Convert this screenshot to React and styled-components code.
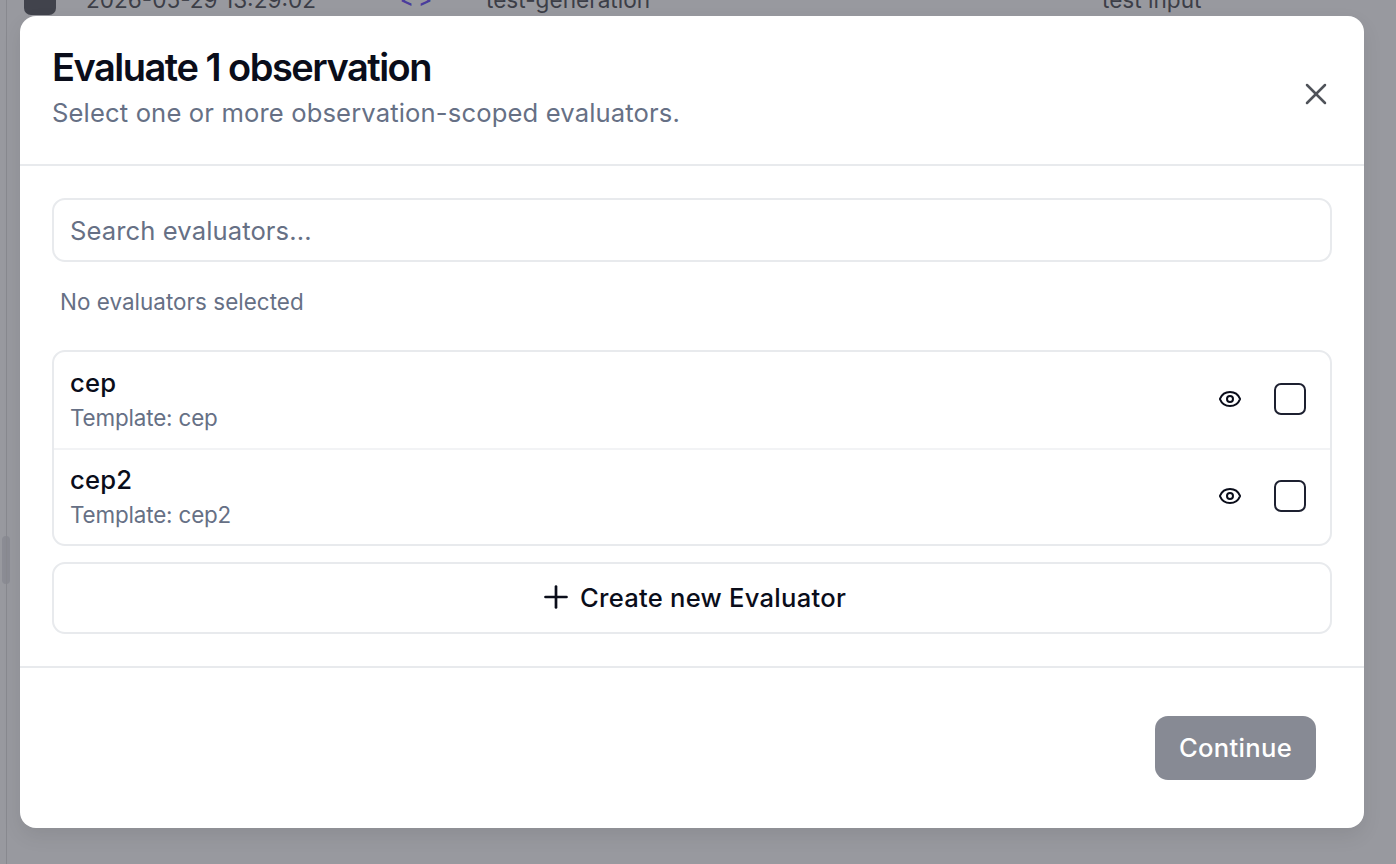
import styled, { createGlobalStyle } from "styled-components";
import { Eye, Plus, X } from "lucide-react";

const GlobalStyle = createGlobalStyle`
  html, body {
    margin: 0;
    padding: 0;
    background: #98999f;
    font-family: Inter, "Liberation Sans", sans-serif;
  }
  * { box-sizing: border-box; }
`;

const evaluators = [
  { name: "cep", template: "Template: cep" },
  { name: "cep2", template: "Template: cep2" },
];

export default function App() {
  return (
    <Page>
      <GlobalStyle />
      <BehindRow>
        <BehindCheck />
        <BehindCell $width="314px">2026-05-29 13:29:02</BehindCell>
        <BehindCode>{"< >"}</BehindCode>
        <BehindCell $width="616px">test-generation</BehindCell>
        <BehindCell $width="200px">test input</BehindCell>
      </BehindRow>
      <ScrollThumb />
      <SideRule />
      <Dialog>
        <Header>
          <Title>Evaluate 1 observation</Title>
          <Subtitle>Select one or more observation-scoped evaluators.</Subtitle>
          <CloseButton aria-label="Close">
            <X size={36} strokeWidth={1.7} />
          </CloseButton>
        </Header>
        <Body>
          <SearchInput placeholder="Search evaluators..." />
          <SelectedNote>No evaluators selected</SelectedNote>
          <List>
            {evaluators.map((item) => (
              <Row key={item.name}>
                <RowText>
                  <RowName>{item.name}</RowName>
                  <RowTemplate>{item.template}</RowTemplate>
                </RowText>
                <EyeButton aria-label="Preview">
                  <Eye size={24} strokeWidth={2} />
                </EyeButton>
                <CheckBox />
              </Row>
            ))}
          </List>
          <CreateButton>
            <Plus size={36} strokeWidth={1.8} />
            Create new Evaluator
          </CreateButton>
        </Body>
        <Footer>
          <ContinueButton>Continue</ContinueButton>
        </Footer>
      </Dialog>
    </Page>
  );
}

const Page = styled.div`
  position: relative;
  width: 1396px;
  height: 864px;
  overflow: hidden;
  background: #98999f;
`;

const BehindRow = styled.div`
  display: flex;
  align-items: center;
  height: 24px;
  margin-top: -13px;
  padding-left: 24px;
  color: #3c3e47;
  font-size: 22.6px;
`;

const BehindCheck = styled.div`
  width: 32px;
  height: 32px;
  margin-right: 30px;
  border-radius: 7px;
  background: #41434c;
`;

const BehindCell = styled.div`
  width: ${(p) => p.$width};
  flex-shrink: 0;
  white-space: nowrap;
`;

const BehindCode = styled.div`
  width: 86px;
  color: #4a3c9c;
  font-size: 20px;
  font-weight: 600;
`;

const SideRule = styled.div`
  position: absolute;
  left: 6px;
  top: 0;
  bottom: 0;
  width: 1px;
  background: #88898f;
`;

const ScrollThumb = styled.div`
  position: absolute;
  left: 2px;
  top: 536px;
  width: 8px;
  height: 48px;
  border-radius: 4px;
  background: #8b8c94;
`;

const Dialog = styled.div`
  position: absolute;
  left: 20px;
  top: 16px;
  width: 1344px;
  height: 812px;
  display: flex;
  flex-direction: column;
  overflow: hidden;
  border-radius: 16px;
  background: #fff;
  box-shadow: 0 8px 20px rgba(0, 0, 0, 0.08);
`;

const Header = styled.div`
  position: relative;
  height: 150px;
  padding: 29px 32px 0;
  border-bottom: 2px solid #e8eaed;
`;

const Title = styled.h2`
  margin: 0;
  color: #0a0d1a;
  font-size: 38px;
  line-height: 44px;
  font-weight: 600;
  letter-spacing: -1.5px;
`;

const Subtitle = styled.p`
  margin: 8px 0 0;
  color: #667085;
  font-size: 25.6px;
  line-height: 32px;
  letter-spacing: 0.14px;
`;

const CloseButton = styled.button`
  position: absolute;
  right: 30px;
  top: 60px;
  display: flex;
  padding: 0;
  border: 0;
  background: none;
  color: #50535a;
`;

const Body = styled.div`
  flex: 1;
  display: flex;
  flex-direction: column;
  padding: 32px 32px 0;
  border-bottom: 2px solid #e8eaed;
`;

const SearchInput = styled.input`
  width: 100%;
  height: 64px;
  padding: 0 16px;
  border: 2px solid #e8eaed;
  border-radius: 13px;
  outline: none;
  background: #fff;
  color: #0a0d1a;
  font-family: inherit;
  font-size: 25.6px;
  letter-spacing: 0.1px;

  &::placeholder {
    color: #667085;
    opacity: 1;
  }
`;

const SelectedNote = styled.div`
  margin: 26px 0 0;
  padding-left: 8px;
  color: #667085;
  font-size: 22.4px;
  line-height: 28px;
  letter-spacing: 0.05px;
`;

const List = styled.div`
  margin-top: 34px;
  border: 2px solid #e8eaed;
  border-radius: 13px;
  overflow: hidden;
`;

const Row = styled.div`
  display: flex;
  align-items: center;
  height: 96px;
  padding: 0 24px 2px 16px;

  & + & {
    border-top: 2px solid #f2f3f5;
  }
`;

const RowText = styled.div`
  flex: 1;
  display: flex;
  flex-direction: column;
  gap: 5px;
`;

const RowName = styled.div`
  color: #0a0d1a;
  font-size: 25.6px;
  line-height: 32px;
  font-weight: 500;
  letter-spacing: 0.2px;
`;

const RowTemplate = styled.div`
  color: #667085;
  font-size: 22.4px;
  line-height: 28px;
  letter-spacing: -0.15px;
`;

const EyeButton = styled.button`
  display: flex;
  margin-right: 32px;
  padding: 0;
  border: 0;
  background: none;
  color: #0a0d1a;
`;

const CheckBox = styled.div`
  width: 32px;
  height: 32px;
  border: 2px solid #1d2030;
  border-radius: 7px;
`;

const CreateButton = styled.button`
  display: flex;
  align-items: center;
  justify-content: center;
  gap: 6px;
  height: 72px;
  margin-top: 16px;
  padding: 0 0 2px;
  border: 2px solid #e8eaed;
  border-radius: 13px;
  background: #fff;
  color: #0a0d1a;
  font-family: inherit;
  font-size: 25.6px;
  font-weight: 500;
  letter-spacing: 0.25px;
`;

const Footer = styled.div`
  flex-shrink: 0;
  display: flex;
  justify-content: flex-end;
  height: 160px;
  padding: 48px 48px 0 0;
`;

const ContinueButton = styled.button`
  width: 161px;
  height: 64px;
  padding: 0 0 2px;
  border: 0;
  border-radius: 13px;
  background: #878a94;
  color: #fff;
  font-family: inherit;
  font-size: 25.6px;
  font-weight: 500;
  letter-spacing: 0.3px;
`;
